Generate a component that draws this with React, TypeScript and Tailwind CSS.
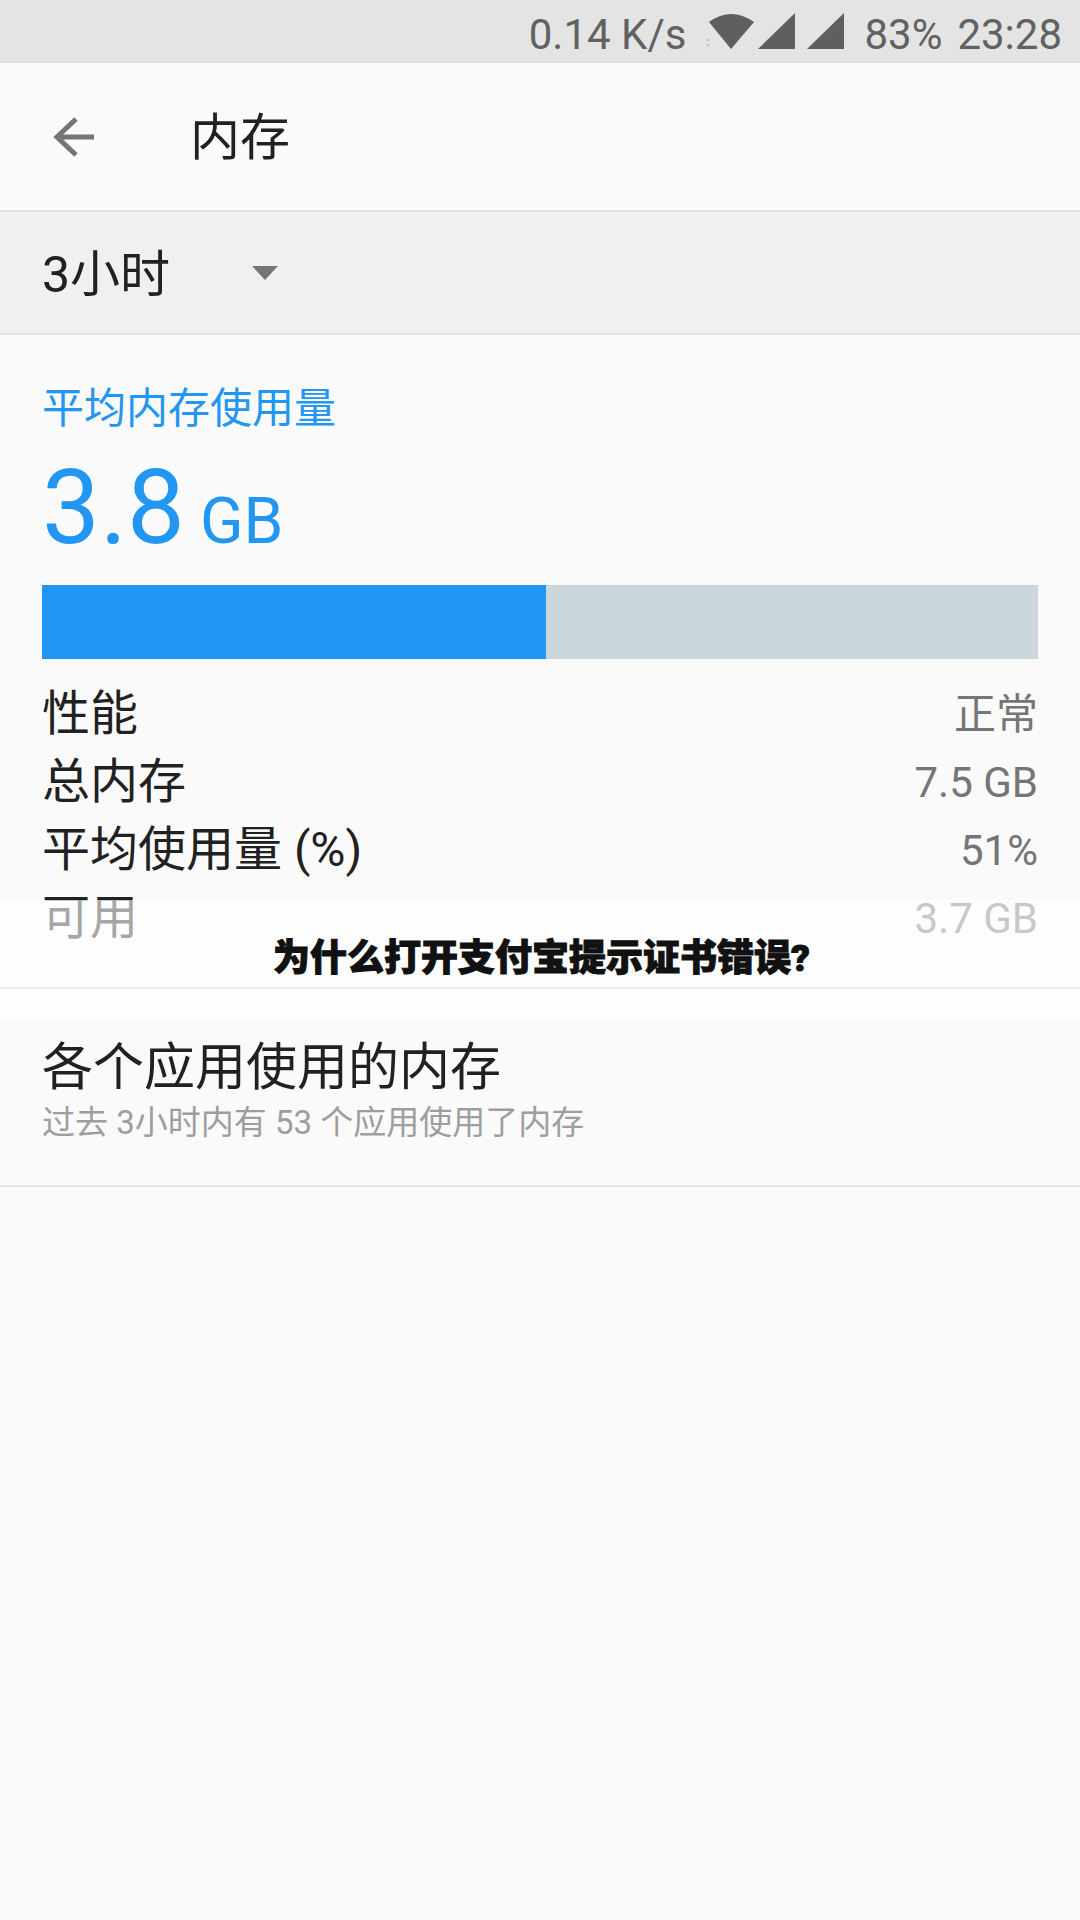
const cjk = "font-['Roboto','Noto_Sans_CJK_SC',sans-serif]";

const rows = [
  { label: '性能', value: '正常' },
  { label: '总内存', value: '7.5 GB' },
  { label: '平均使用量 (%)', value: '51%' },
  { label: '可用', value: '3.7 GB' },
];

const Signal = () => (
  <svg width="37" height="36" viewBox="0 0 37 36">
    <path d="M37 0V36H0Z" fill="#5f5f5f" />
  </svg>
);

const App = () => {
  return (
    <div className={`relative h-[1920px] w-[1080px] overflow-hidden bg-[#fafafa] ${cjk}`}>
      <header className="flex h-[63px] items-center justify-end border-b border-[#dcdcdc] bg-[#e4e4e4] pr-[18px] text-[42px] text-[#616161]">
        <span className="mr-[18px] mt-[6px]">0.14 K/s</span>
        <svg width="50" height="38" viewBox="0 0 50 38" className="mr-[4px]">
          <path d="M5 10Q27 -6 50 10L27 37Z" fill="#5f5f5f" />
          <path d="M2 29l2-3 2 3ZM2 32l2 3 2-3Z" fill="#c4c4c4" />
        </svg>
        <Signal />
        <div className="ml-[12px]">
          <Signal />
        </div>
        <span className="ml-[20px] mt-[6px]">83%</span>
        <span className="ml-[15px] mt-[6px]">23:28</span>
      </header>

      <div className="flex h-[147px] items-center bg-[#fafafa]">
        <svg width="42" height="42" viewBox="0 0 42 42" className="ml-[52px]">
          <path d="M43 21H5M24 3 5 21l19 18" fill="none" stroke="#757575" strokeWidth="5" />
        </svg>
        <h1 className="ml-[96px] mt-[2px] text-[50px] leading-none text-[#212121]">内存</h1>
      </div>

      <div className="flex h-[125px] items-center border-y-2 border-[#e2e2e2] bg-[#f0f0f0] pl-[42px] pt-[6px]">
        <span className="w-[210px] text-[50px] text-[#212121]">3小时</span>
        <div className="-mt-[6px] h-0 w-0 border-x-[13px] border-t-[14px] border-x-transparent border-t-[#757575]" />
      </div>

      <section className="px-[42px] pt-[46px]">
        <div className="text-[42px] leading-[56px] text-[#2196f3]">平均内存使用量</div>
        <div className="mt-[17px] flex h-[105px] items-baseline text-[#2196f3]">
          <span className="text-[103px] leading-[108px]">3.8</span>
          <span className="ml-[15px] text-[64px] leading-none">GB</span>
        </div>
        <div className="mt-[26px] flex h-[74px] bg-[#ccd6dd]">
          <div className="w-[504px] bg-[#2196f3]" />
        </div>
        <div className="mt-[21px] flex flex-col">
          {rows.map((row) => (
            <div key={row.label} className="flex h-[68px] items-center justify-between">
              <span className="text-[48px] leading-none text-[#212121]">{row.label}</span>
              <span className="mt-[1px] text-[42px] leading-none text-[#757575]">{row.value}</span>
            </div>
          ))}
        </div>
      </section>

      <div className="absolute left-0 top-[900px] flex h-[87px] w-full justify-center bg-white/60 pl-[3px] pt-[35px]">
        <span className="text-[37px] font-black leading-[48px] text-[#111111] [-webkit-text-stroke:1px_#111111]">
          为什么打开支付宝提示证书错误?
        </span>
      </div>
      <div className="absolute left-0 top-[987px] h-[2px] w-full bg-[#eeeeee]" />
      <div className="absolute left-0 top-[989px] h-[29px] w-full bg-[#fefefe]" />

      <section className="mt-[85px] flex h-[150px] flex-col border-b-2 border-[#e2e2e2] pl-[42px]">
        <div className="text-[51px] leading-[62px] text-[#212121]">各个应用使用的内存</div>
        <div className="mt-[2px] text-[33px] leading-[44px] text-[#9e9e9e]">过去 3小时内有 53 个应用使用了内存</div>
      </section>
    </div>
  );
};

export default App;
